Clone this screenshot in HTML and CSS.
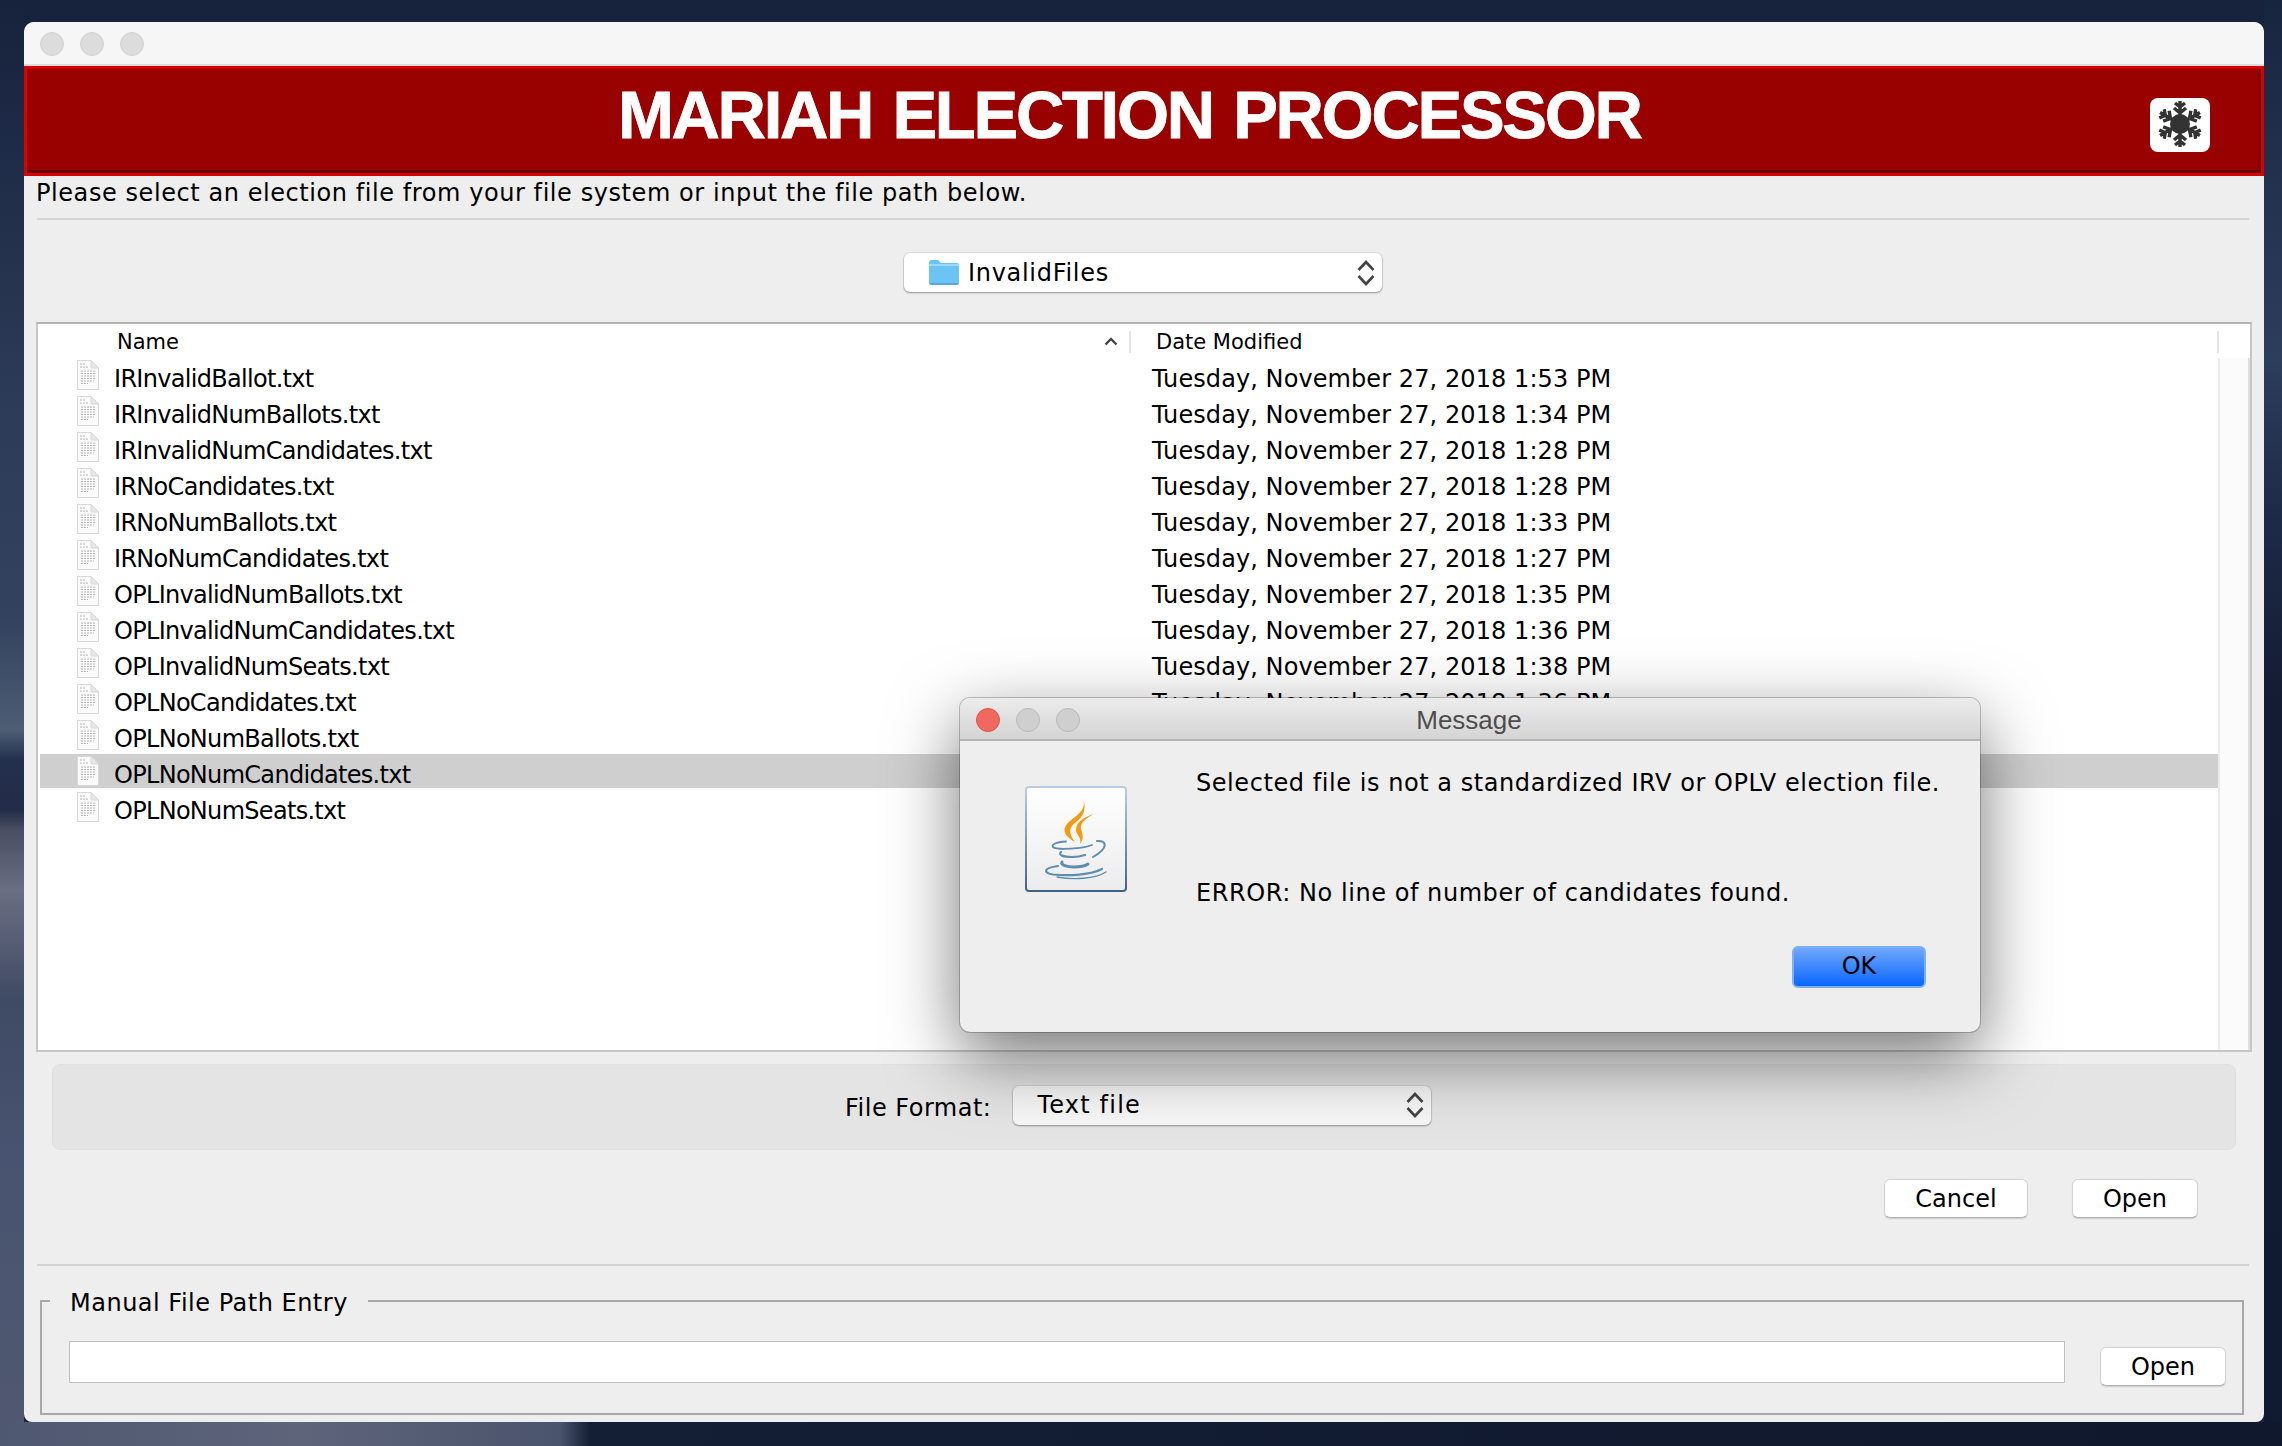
FILE: index.html
```html
<!DOCTYPE html>
<html lang="en">

<head>
    <meta charset="UTF-8">
    <title>Mariah Election Processor</title>
    <link rel="stylesheet" href="styles.css">
</head>

<body>
    <svg class="hidden-defs" width="0" height="0">
        <defs>
            <symbol id="file-icon" viewBox="0 0 24 32">
                <path d="M1.500 1.500H15L22.500 9V30.500H1.500Z" fill="#fbfbfb" stroke="#d8d8d8"/>
                <path d="M15 1.500V9H22.500Z" fill="#e8e8e8" stroke="#d8d8d8"/>
                <path d="M4 5H10M4 8H12M5 12H19M5 14.500H19M5 17H19M5 19.500H19M5 22H18M5 24.500H12" stroke="#b4b4b4" stroke-width="1" stroke-dasharray="2 1"/>
            </symbol>
            <symbol id="updown" viewBox="0 0 18 32">
                <path d="M1.500 13L9 5L16.500 13M1.500 19L9 27L16.500 19" fill="none" stroke="#444" stroke-width="2.600"/>
            </symbol>
            <g id="flake-arm">
                <path d="M30 26V3M30 9L25 5M30 9L35 5M30 15L24 10M30 15L36 10" fill="none" stroke="#333" stroke-width="3.400"/>
            </g>
        </defs>
    </svg>

    <div class="window">
        <div class="titlebar">
            <span class="light"></span>
            <span class="light"></span>
            <span class="light"></span>
        </div>

        <div class="banner">
            <h1 class="banner-title">MARIAH ELECTION PROCESSOR</h1>
            <div class="flake-btn">
                <svg width="60" height="54" viewBox="0 0 60 54">
                    <use href="#flake-arm"/>
                    <use href="#flake-arm" transform="rotate(60 30 26)"/>
                    <use href="#flake-arm" transform="rotate(120 30 26)"/>
                    <use href="#flake-arm" transform="rotate(180 30 26)"/>
                    <use href="#flake-arm" transform="rotate(240 30 26)"/>
                    <use href="#flake-arm" transform="rotate(300 30 26)"/>
                    <circle cx="30" cy="26" r="10" fill="#333"/>
                </svg>
            </div>
        </div>

        <p class="instructions">Please select an election file from your file system or input the file path below.</p>
        <div class="rule"></div>

        <div class="folder-row">
            <div class="combo folder-combo">
                <svg class="folder-icon" width="30" height="25" viewBox="0 0 30 25">
                    <path d="M0 3Q0 0 3 0H9L12 3H28Q30 3 30 5V22Q30 25 27 25H3Q0 25 0 22Z" fill="#6cc4f4"/>
                    <path d="M0 6H30V5Q30 4 28 4H0Z" fill="#9adafa"/>
                    <path d="M0 23H30V22Q30 25 27 25H3Q0 25 0 22Z" fill="#52a9dc"/>
                </svg>
                <span class="combo-text">InvalidFiles</span>
                <svg class="updown"><use href="#updown"/></svg>
            </div>
        </div>

        <div class="file-list">
            <div class="list-main">
                <div class="list-head">
                    <span class="head-name">Name</span>
                    <svg class="sort-caret" width="14" height="9" viewBox="0 0 14 9">
                        <path d="M1.500 7.500L7 2L12.500 7.500" fill="none" stroke="#444" stroke-width="2.400"/>
                    </svg>
                    <span class="head-sep"></span>
                    <span class="head-date">Date Modified</span>
                </div>
                <div class="row"><svg class="file-icon"><use href="#file-icon"/></svg><span class="row-name">IRInvalidBallot.txt</span><span class="row-date">Tuesday, November 27, 2018 1:53 PM</span></div>
                <div class="row"><svg class="file-icon"><use href="#file-icon"/></svg><span class="row-name">IRInvalidNumBallots.txt</span><span class="row-date">Tuesday, November 27, 2018 1:34 PM</span></div>
                <div class="row"><svg class="file-icon"><use href="#file-icon"/></svg><span class="row-name">IRInvalidNumCandidates.txt</span><span class="row-date">Tuesday, November 27, 2018 1:28 PM</span></div>
                <div class="row"><svg class="file-icon"><use href="#file-icon"/></svg><span class="row-name">IRNoCandidates.txt</span><span class="row-date">Tuesday, November 27, 2018 1:28 PM</span></div>
                <div class="row"><svg class="file-icon"><use href="#file-icon"/></svg><span class="row-name">IRNoNumBallots.txt</span><span class="row-date">Tuesday, November 27, 2018 1:33 PM</span></div>
                <div class="row"><svg class="file-icon"><use href="#file-icon"/></svg><span class="row-name">IRNoNumCandidates.txt</span><span class="row-date">Tuesday, November 27, 2018 1:27 PM</span></div>
                <div class="row"><svg class="file-icon"><use href="#file-icon"/></svg><span class="row-name">OPLInvalidNumBallots.txt</span><span class="row-date">Tuesday, November 27, 2018 1:35 PM</span></div>
                <div class="row"><svg class="file-icon"><use href="#file-icon"/></svg><span class="row-name">OPLInvalidNumCandidates.txt</span><span class="row-date">Tuesday, November 27, 2018 1:36 PM</span></div>
                <div class="row"><svg class="file-icon"><use href="#file-icon"/></svg><span class="row-name">OPLInvalidNumSeats.txt</span><span class="row-date">Tuesday, November 27, 2018 1:38 PM</span></div>
                <div class="row"><svg class="file-icon"><use href="#file-icon"/></svg><span class="row-name">OPLNoCandidates.txt</span><span class="row-date">Tuesday, November 27, 2018 1:36 PM</span></div>
                <div class="row"><svg class="file-icon"><use href="#file-icon"/></svg><span class="row-name">OPLNoNumBallots.txt</span></div>
                <div class="row selected"><svg class="file-icon"><use href="#file-icon"/></svg><span class="row-name">OPLNoNumCandidates.txt</span></div>
                <div class="row"><svg class="file-icon"><use href="#file-icon"/></svg><span class="row-name">OPLNoNumSeats.txt</span></div>
            </div>
            <div class="list-scroll">
                <span class="scroll-sep"></span>
                <div class="scroll-track"></div>
            </div>
        </div>

        <div class="format-panel">
            <span class="format-label">File Format:</span>
            <div class="combo format-combo">
                <span class="combo-text format-text">Text file</span>
                <svg class="updown"><use href="#updown"/></svg>
            </div>
        </div>

        <div class="actions">
            <button class="btn btn-cancel">Cancel</button>
            <button class="btn btn-open">Open</button>
        </div>

        <div class="rule rule-low"></div>

        <div class="manual-box">
            <span class="manual-title">Manual File Path Entry</span>
            <div class="manual-row">
                <input class="path-input" type="text">
                <button class="btn btn-open">Open</button>
            </div>
        </div>

        <div class="dialog">
            <div class="dialog-bar">
                <div class="dialog-lights">
                    <span class="light light-close"></span>
                    <span class="light light-off"></span>
                    <span class="light light-off"></span>
                </div>
                <span class="dialog-title">Message</span>
            </div>
            <div class="dialog-body">
                <svg class="java-icon" width="102" height="106" viewBox="0 0 102 106">
                    <defs>
                        <linearGradient id="java-border" x1="0" y1="0" x2="0" y2="1">
                            <stop offset="0" stop-color="#b9cde0"/>
                            <stop offset="1" stop-color="#3f6486"/>
                        </linearGradient>
                        <linearGradient id="java-fill" x1="0" y1="0" x2="0" y2="1">
                            <stop offset="0" stop-color="#ffffff"/>
                            <stop offset="1" stop-color="#ececec"/>
                        </linearGradient>
                    </defs>
                    <rect x="1" y="1" width="100" height="104" rx="3" fill="url(#java-fill)" stroke="url(#java-border)" stroke-width="2"/>
                    <path d="M58 12C62 24 52 29 45 35C38 41 36 48 50 56C43 47 44 41 51 36C58 31 62 24 58 12Z" fill="#f29b10"/>
                    <path d="M69 28C59 31 51 36 51 44C51 49 57 51 55 58C60 52 57 47 56 43C55 37 60 33 69 28Z" fill="#f29b10"/>
                    <g fill="none" stroke="#5f8dad" stroke-linecap="round">
                        <path d="M41 55.500C30 56 26 59 28 61C31 64 58 63 67 59" stroke-width="1.800"/>
                        <path d="M72 55C82 54 84 62 68 71" stroke-width="2"/>
                        <path d="M36 66C33 69 38 71 47 71C52 71 57 70 60 69" stroke-width="2.200"/>
                        <path d="M37 76C35 79 42 81 49 81C55 81 60 80 63 78" stroke-width="3"/>
                        <path d="M33 80C18 82 18 87 28 88.500C44 90 66 89 77 83" stroke-width="2.200"/>
                        <path d="M32 91C48 94 70 93 81 86" stroke-width="1.400"/>
                    </g>
                </svg>
                <div class="dialog-main">
                    <p class="dialog-line">Selected file is not a standardized IRV or OPLV election file.</p>
                    <p class="dialog-line dialog-error">ERROR: No line of number of candidates found.</p>
                    <div class="dialog-actions">
                        <button class="btn-ok">OK</button>
                    </div>
                </div>
            </div>
        </div>
    </div>
</body>

</html>
```

FILE: styles.css
```css
* {
    box-sizing: border-box;
}

body {
    margin: 0;
    width: 2282px;
    height: 1446px;
    padding: 22px 18px 0 24px;
    overflow: hidden;
    font-family: "DejaVu Sans", sans-serif;
    color: #000;
    background-color: #17223c;
    /* only the strips around the window show: left, right, bottom */
    background-image:
        linear-gradient(90deg, #4e5870 0, #5e647a 300px, #4a546c 560px, #141e35 590px, #0f182c 100%),
        linear-gradient(180deg, #17223c 0, #2c3b58 400px, #33435f 620px, #4d5d74 730px, #23304d 760px, #232c48 810px, #4a4e62 830px, #6a6e82 890px, #3f4a64 1000px, #475370 1150px, #4f5870 1400px),
        linear-gradient(180deg, #18253f 0, #2d3d5c 360px, #1d2a46 520px, #141c33 700px, #0f1a30 1446px);
    background-position: left bottom, left top, right top;
    background-size: 100% 24px, 24px 100%, 18px 100%;
    background-repeat: no-repeat;
}

.hidden-defs {
    position: absolute;
}

.window {
    position: relative;
    width: 2240px;
    height: 1400px;
    background-color: #eeeeee;
    border-radius: 10px 10px 8px 8px;
    overflow: hidden;
}

.titlebar {
    display: flex;
    align-items: center;
    gap: 16px;
    height: 44px;
    padding: 2px 0 0 16px;
    background-color: #f6f6f6;
    border-bottom: 2px solid #dddddd;
}

.light {
    width: 24px;
    height: 24px;
    border-radius: 50%;
    background-color: #dcdcdc;
    border: 1px solid #d2d2d2;
}

.banner {
    display: flex;
    align-items: center;
    height: 110px;
    padding: 0 51px 0 591px;
    background-color: #990000;
    border: 3px solid #d90000;
    box-shadow: inset -2px -3px 0 #660000;
}

.banner-title {
    margin: 0 0 14px;
    font-family: "Liberation Sans", Arial, sans-serif;
    font-size: 67px;
    font-weight: bold;
    letter-spacing: -2.3px;
    word-spacing: 4px;
    color: #fff;
    -webkit-text-stroke: 0.8px #fff;
}

.flake-btn {
    display: flex;
    margin-left: auto;
    margin-top: 8px;
    background-color: #fff;
    border-radius: 8px;
}

.instructions {
    margin: 0;
    padding-left: 12px;
    height: 42px;
    line-height: 35px;
    font-size: 24px;
    letter-spacing: 0.57px;
}

.rule {
    height: 2px;
    margin: 0 15px 0 13px;
    background-color: #d4d4d4;
}

.folder-row {
    display: flex;
    padding: 33px 0 30px 880px;
}

.combo {
    display: flex;
    align-items: center;
    height: 39px;
    background-color: #fff;
    border-radius: 6px;
    box-shadow: 0 1px 2px rgba(0, 0, 0, 0.35), 0 0 0 1px rgba(0, 0, 0, 0.06);
}

.folder-combo {
    width: 478px;
    padding: 0 7px 0 25px;
}

.folder-icon {
    margin-right: 9px;
}

.combo-text {
    font-size: 24px;
    letter-spacing: 0.7px;
}

.format-text {
    letter-spacing: 1.2px;
}

.updown {
    width: 18px;
    height: 32px;
    margin-left: auto;
}

.file-list {
    display: flex;
    width: 2216px;
    height: 730px;
    margin-left: 12px;
    background-color: #fff;
    border: 2px solid #c6c6c6;
    border-top-color: #b4b4b4;
}

.list-main {
    width: 2180px;
    flex: none;
}

.list-head {
    display: flex;
    align-items: center;
    height: 34px;
    padding-top: 1px;
    font-size: 21px;
}

.head-name {
    width: 1066px;
    padding-left: 79px;
}

.sort-caret {
    margin-right: 11px;
}

.head-sep {
    width: 2px;
    height: 22px;
    margin-right: 25px;
    background-color: #e4e4e4;
}

.row {
    display: flex;
    align-items: center;
    height: 36px;
    padding-left: 38px;
    font-size: 24px;
    line-height: 26px;
    white-space: nowrap;
    border-bottom: 2px solid transparent;
    background-clip: padding-box;
}

.selected {
    background-color: #cfcfcf;
    margin-left: 2px;
    padding-left: 36px;
}

.file-icon {
    width: 24px;
    height: 32px;
    margin-right: 14px;
    flex: none;
}

.row-name {
    width: 1038px;
    flex: none;
    padding-top: 7px;
    letter-spacing: -0.7px;
}

.row-date {
    padding-top: 7px;
    letter-spacing: 0.08px;
}

.list-scroll {
    display: flex;
    flex-direction: column;
    flex: 1;
}

.scroll-sep {
    width: 2px;
    height: 22px;
    margin: 7px 0 5px -1px;
    background-color: #e4e4e4;
}

.scroll-track {
    flex: 1;
    background-color: #fbfbfb;
    border-left: 2px solid #ececec;
    border-right: 2px solid #e0e0e0;
}

.format-panel {
    display: flex;
    align-items: center;
    width: 2184px;
    height: 86px;
    margin: 12px 0 0 28px;
    padding-left: 792px;
    background-color: #e4e4e4;
    border: 1px solid #e0e0e0;
    border-radius: 8px;
}

.format-label {
    font-size: 24px;
    letter-spacing: 0.5px;
    margin-right: 22px;
    margin-top: 2px;
}

.format-combo {
    width: 418px;
    margin-bottom: 4px;
    padding: 0 7px 0 24px;
    background-color: #f6f6f6;
}

.actions {
    display: flex;
    justify-content: flex-end;
    gap: 44px;
    padding: 29px 66px 0 0;
}

.btn {
    height: 39px;
    padding: 0;
    font-family: inherit;
    font-size: 24px;
    color: #000;
    background-color: #fff;
    border: 1px solid #d4d4d4;
    border-bottom-color: #b4b4b4;
    border-radius: 6px;
    box-shadow: 0 1px 1px rgba(0, 0, 0, 0.15);
}

.btn-cancel {
    width: 144px;
}

.btn-open {
    width: 126px;
}

.rule-low {
    margin-top: 46px;
}

.manual-box {
    position: relative;
    width: 2204px;
    height: 115px;
    margin: 34px 0 0 16px;
    padding: 39px 0 0 27px;
    border: 2px solid #a8a8a8;
}

.manual-title {
    position: absolute;
    left: 8px;
    top: -13px;
    padding: 0 20px;
    font-size: 24px;
    letter-spacing: 0.5px;
    background-color: #eeeeee;
}

.manual-row {
    display: flex;
    align-items: flex-start;
}

.path-input {
    width: 1996px;
    height: 42px;
    margin-right: 35px;
    background-color: #fff;
    border: 1px solid #c0c0c0;
    outline: none;
}

.manual-row .btn {
    margin-top: 6px;
}

/* the Message dialog sits on top of the file chooser */
.dialog {
    position: absolute;
    left: 936px;
    top: 676px;
    width: 1020px;
    height: 334px;
    background-color: #eeeeee;
    border-radius: 10px;
    box-shadow: 0 0 0 1px rgba(0, 0, 0, 0.22), 0 24px 70px rgba(0, 0, 0, 0.55);
    overflow: hidden;
}

.dialog-bar {
    position: relative;
    display: flex;
    align-items: center;
    justify-content: center;
    height: 43px;
    background: linear-gradient(#ececec, #d4d4d4);
    border-bottom: 2px solid #b4b4b4;
}

.dialog-lights {
    position: absolute;
    left: 16px;
    top: 10px;
    display: flex;
    gap: 16px;
}

.light-close {
    background-color: #f2675f;
    border-color: #e0544c;
}

.light-off {
    background-color: #cfcfcf;
    border-color: #b8b8b8;
}

.dialog-title {
    margin: 3px 0 0 -2px;
    font-family: "Liberation Sans", Arial, sans-serif;
    font-size: 26px;
    color: #4d4d4d;
}

.dialog-body {
    display: flex;
    padding: 45px 54px 0 65px;
}

.java-icon {
    flex: none;
    margin-right: 69px;
}

.dialog-main {
    flex: 1;
    min-width: 0;
    margin-top: -21px;
}

.dialog-line {
    margin: 0;
    height: 36px;
    line-height: 36px;
    font-size: 24px;
    letter-spacing: 0.56px;
    white-space: nowrap;
}

.dialog-error {
    margin-top: 74px;
}

.dialog-actions {
    display: flex;
    justify-content: flex-end;
    margin-top: 35px;
}

.btn-ok {
    width: 134px;
    height: 42px;
    padding: 0 0 2px;
    font-family: inherit;
    font-size: 24px;
    color: #000;
    background: linear-gradient(#70a8fb, #0a66fe);
    border: 2px solid #79b0f8;
    border-radius: 6px;
}
```
